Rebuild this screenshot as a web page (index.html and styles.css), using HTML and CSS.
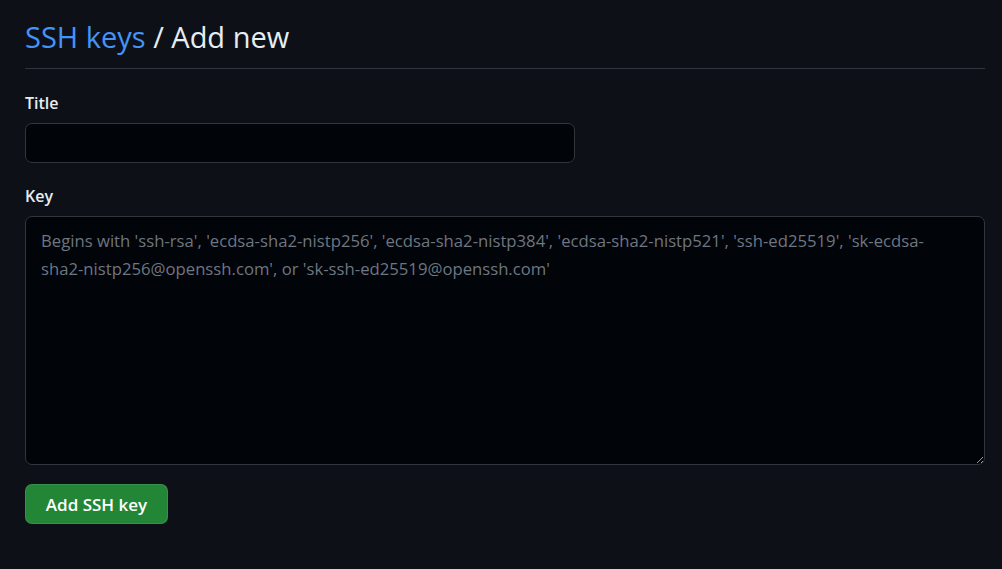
FILE: index.html
```html
<!DOCTYPE html>
<html lang="en">
<head>
<meta charset="utf-8">
<title>SSH keys / Add new</title>
<link rel="stylesheet" href="styles.css">
</head>
<body>
<main class="page">
  <div class="subhead">
    <h2 class="subhead-heading"><a class="crumb" href="#">SSH keys</a> / Add new</h2>
  </div>
  <form class="form">
    <div class="form-group">
      <label class="form-label" for="title">Title</label>
      <input class="form-input title-input" id="title" type="text">
    </div>
    <div class="form-group form-group-last">
      <label class="form-label" for="key">Key</label>
      <textarea class="form-input key-input" id="key" placeholder="Begins with 'ssh-rsa', 'ecdsa-sha2-nistp256', 'ecdsa-sha2-nistp384', 'ecdsa-sha2-nistp521', 'ssh-ed25519', 'sk-ecdsa-sha2-nistp256@openssh.com', or 'sk-ssh-ed25519@openssh.com'"></textarea>
    </div>
    <div class="actions">
      <button class="btn-primary" type="button">Add SSH key</button>
    </div>
  </form>
</main>
</body>
</html>
```

FILE: styles.css
```css
html, body {
  margin: 0;
  padding: 0;
  background: #0d1117;
  height: 100%;
}
body {
  font-family: "Open Sans", "Noto Sans", sans-serif;
  color: #e6edf3;
}
.page {
  width: 960px;
  padding: 18px 0 0 25px;
}
.subhead {
  border-bottom: 1px solid #30363d;
  padding-bottom: 13px;
  margin-bottom: 22px;
}
.subhead-heading {
  margin: 0;
  font-size: 29px;
  font-weight: 400;
  line-height: 37px;
  color: #e6edf3;
}
.crumb {
  color: #4493f8;
  text-decoration: none;
}
.form-group {
  display: flex;
  flex-direction: column;
  margin-bottom: 21px;
}
.form-group-last {
  margin-bottom: 19px;
}
.form-label {
  font-size: 16px;
  font-weight: 600;
  line-height: 24px;
  margin-bottom: 8px;
  color: #e6edf3;
}
.form-input {
  box-sizing: border-box;
  background: #010409;
  border: 1px solid #30363d;
  border-radius: 7px;
  color: #e6edf3;
  font-family: "Open Sans", "Noto Sans", sans-serif;
  outline: none;
}
.title-input {
  width: 550px;
  height: 40px;
  padding: 5px 15px;
  font-size: 16px;
}
.key-input {
  width: 960px;
  height: 249px;
  padding: 10px 24px 10px 15px;
  font-size: 16.7px;
  line-height: 28px;
  resize: vertical;
}
.key-input::placeholder {
  color: #6e7681;
}
.btn-primary {
  box-sizing: border-box;
  height: 40px;
  width: 143px;
  background: #238636;
  border: 1px solid rgba(240, 246, 252, 0.1);
  border-radius: 7px;
  color: #ffffff;
  font-family: "Open Sans", "Noto Sans", sans-serif;
  font-size: 17px;
  font-weight: 600;
  padding: 0;
}
```
